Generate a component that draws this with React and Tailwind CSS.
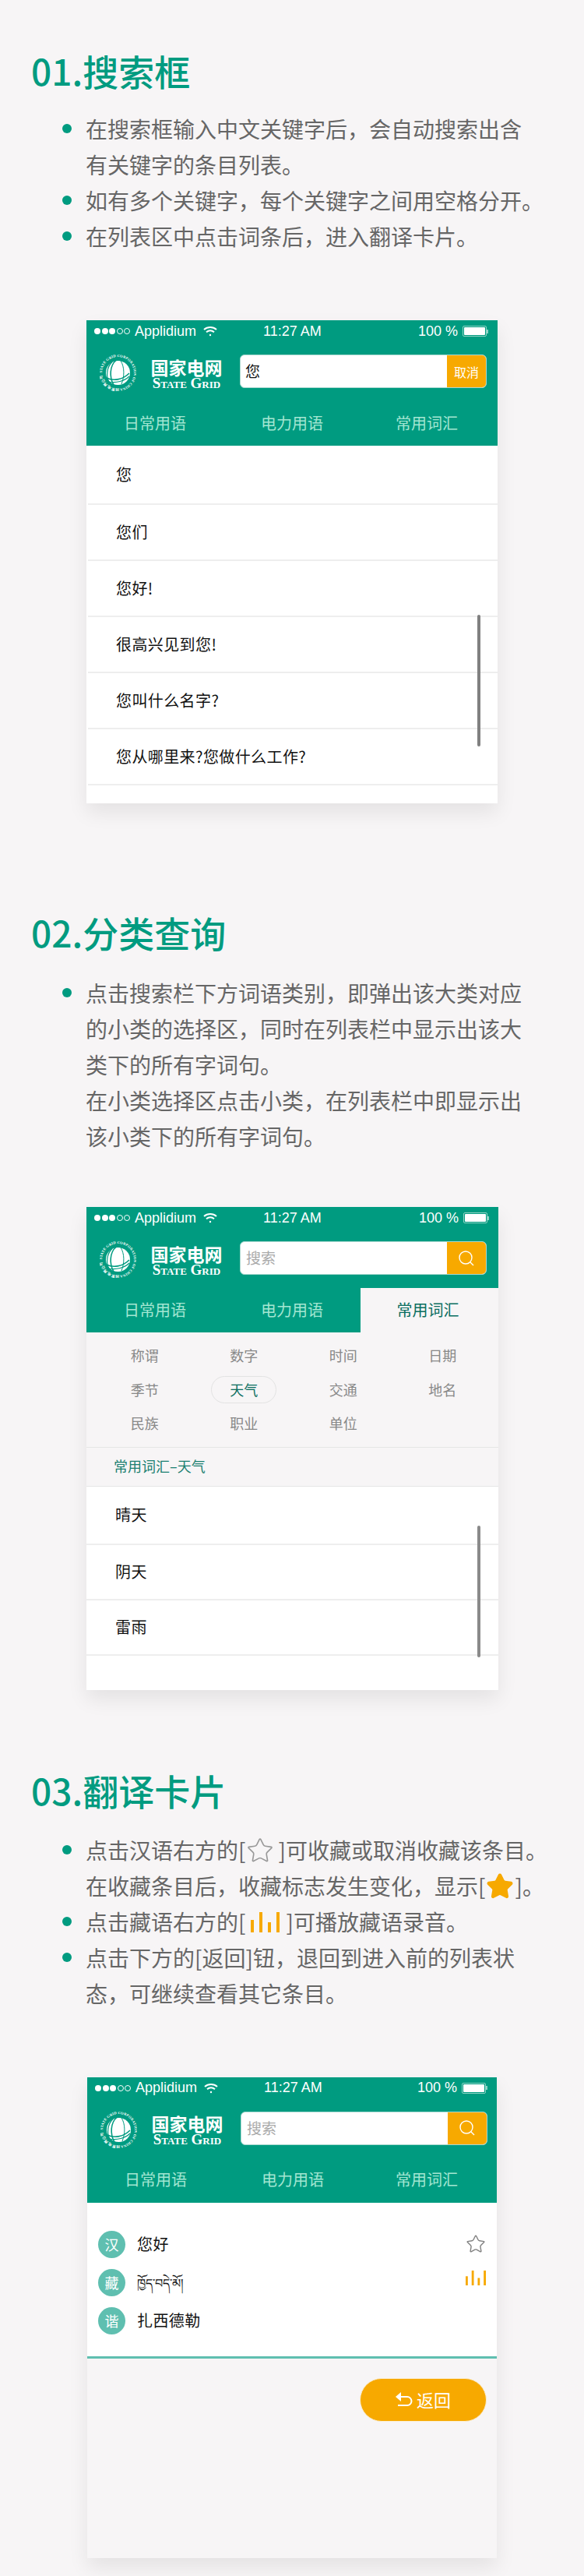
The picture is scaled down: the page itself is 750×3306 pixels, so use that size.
import React, { useId } from "react";
import { Star } from "lucide-react";

const TABS = ["日常用语", "电力用语", "常用词汇"];
const SUBS = ["称谓", "数字", "时间", "日期", "季节", "天气", "交通", "地名", "民族", "职业", "单位"];

function Bars({ className }) {
  return (
    <svg className={className} viewBox="0 0 37 26" preserveAspectRatio="none" fill="#f7a900">
      <rect x="0" y="10" width="4" height="16" />
      <rect x="11" y="0" width="4" height="26" />
      <rect x="22" y="13" width="4" height="13" />
      <rect x="33" y="0" width="4" height="26" />
    </svg>
  );
}

function Logo() {
  const id = useId();
  return (
    <svg width="47" height="47" viewBox="0 0 47 47" className="mt-[4px] shrink-0">
      <defs>
        <path id={id} d="M23.5 23.5 m-20.4 0 a20.4 20.4 0 1 1 40.8 0 a20.4 20.4 0 1 1 -40.8 0" />
      </defs>
      <text fill="#fff" fontSize="4.6" fontWeight="700" fontFamily="Liberation Serif, serif" textLength="125">
        <textPath href={`#${id}`}>STATE GRID CORPORATION OF CHINA 国家电网公司</textPath>
      </text>
      <circle cx="23.5" cy="23.5" r="15.5" fill="#fff" />
      <g fill="none" stroke="#009b80">
        <path d="M21 7.5C13 14 12 29 18 39" strokeWidth="1.6" />
        <path d="M16 9.5C9 16 8 28 12 35" strokeWidth="1.2" />
        <path d="M9 30c8 4 20 3 29-6" strokeWidth="1.6" />
        <path d="M12 35c9 2 20-1 26-7" strokeWidth="1.2" />
        <path d="M27 8c5 8 5 20 1 30" strokeWidth="1" />
      </g>
    </svg>
  );
}

function StatusBar() {
  return (
    <div className="flex h-[28px] items-center pl-[10px] pr-[12px] font-['Liberation_Sans',sans-serif] text-[18px] text-white">
      <div className="flex w-[217px] items-center">
        <span className="size-[8px] rounded-full bg-white" />
        <span className="ml-[1.5px] size-[8px] rounded-full bg-white" />
        <span className="ml-[1.5px] size-[8px] rounded-full bg-white" />
        <span className="ml-[1.5px] size-[8px] rounded-full border border-white" />
        <span className="ml-[1.5px] size-[8px] rounded-full border border-white" />
        <span className="ml-[6px]">Applidium</span>
        <svg className="ml-[9px]" width="18" height="14" viewBox="0 0 18 14" fill="none" stroke="#fff" strokeWidth="2">
          <path d="M1 5c4.500-4 11.500-4 16 0" />
          <path d="M4 8.300c3-2.600 7-2.600 10 0" />
          <circle cx="9" cy="12" r="1.200" fill="#fff" stroke="none" />
        </svg>
      </div>
      <span>11:27 AM</span>
      <span className="ml-auto">100 %</span>
      <span className="ml-[6px] flex h-[14px] w-[31px] rounded-[2px] border border-[#8fd4c5] p-[1px]">
        <span className="w-full rounded-[1px] bg-white" />
      </span>
      <span className="h-[5px] w-[2px] bg-[#8fd4c5]" />
    </div>
  );
}

function PhoneHeader({ value, active }) {
  return (
    <div className="bg-[#009b80]">
      <StatusBar />
      <div className="mt-[16px] flex h-[43px] items-center pl-[17px]">
        <Logo />
        <div className="mt-[3px] ml-[18px] flex w-[93px] flex-col items-center text-white">
          <div className="text-[23px] font-bold leading-[26px] whitespace-nowrap">国家电网</div>
          <div className="font-['Liberation_Serif',serif] text-[19px] font-bold leading-[15px] whitespace-nowrap [font-variant:small-caps]">
            State Grid
          </div>
        </div>
        <div className="ml-[22px] flex h-[43px] w-[317px] overflow-hidden rounded-[6px] border border-[#a9d8cf] bg-white">
          <div className={value ? "flex-1 pl-[6px] text-[19px] leading-[39px] text-[#111]" : "flex-1 pl-[7px] text-[19px] leading-[39px] text-[#aaaaaa]"}>
            {value || "搜索"}
          </div>
          <div className="flex w-[50px] items-center justify-center bg-[#f7a900] text-[16px] text-white">
            {value ? (
              "取消"
            ) : (
              <svg width="20" height="20" viewBox="0 0 20 20" fill="none" stroke="#fff">
                <circle cx="9" cy="9" r="8" strokeWidth="1.400" />
                <path d="M14.800 14.800l4.200 4.200" strokeWidth="1.400" />
              </svg>
            )}
          </div>
        </div>
      </div>
      <div className="mt-[17px] grid h-[57px] grid-cols-[176px_176px_1fr]">
        {TABS.map((tab, i) => (
          <div
            key={tab}
            className={
              i === active
                ? "flex items-center justify-center bg-[#f7f5f6] pr-[4px] pb-[2px] text-[20px] text-[#0a6e60]"
                : i === 2
                  ? "flex items-center justify-center pr-[6px] pb-[2px] text-[20px] text-[#a3e6d2]"
                  : "flex items-center justify-center pb-[2px] text-[20px] text-[#a3e6d2]"
            }
          >
            {tab}
          </div>
        ))}
      </div>
    </div>
  );
}

function Row({ text, first }) {
  return (
    <div className={first ? "ml-[2px] flex h-[76px] items-center border-b-2 border-[#eeeeee] pl-[36px] text-[20px] tracking-[0.4px] text-[#111]" : "ml-[2px] flex h-[72px] items-center border-b-2 border-[#eeeeee] pl-[36px] text-[20px] tracking-[0.4px] text-[#111]"}>
      {text}
    </div>
  );
}

function Bullet({ children }) {
  return (
    <li className="flex">
      <span className="mt-[17px] h-[12px] w-[12px] shrink-0 rounded-full bg-[#009b80]" />
      <div className="ml-[18px] whitespace-nowrap">{children}</div>
    </li>
  );
}

function Title({ children }) {
  return <h2 className="ml-[40px] h-[60px] text-[46px] leading-[60px] font-medium text-[#009b80]">{children}</h2>;
}

function Lang({ tag, text, small }) {
  return (
    <div className="flex items-center">
      <span className="flex size-[35px] items-center justify-center rounded-full bg-[#5fbfb0] text-[18px] text-white">{tag}</span>
      <span className={small ? "ml-[15px] text-[16px] text-[#111]" : "ml-[15px] text-[20px] tracking-[0.4px] text-[#111]"}>{text}</span>
    </div>
  );
}

export default function App() {
  return (
    <div className="h-[3306px] w-[750px] overflow-hidden bg-[#f7f5f6] pt-[60px] font-['Noto_Sans_CJK_SC','Noto_Sans',sans-serif]">
      <Title>01.搜索框</Title>
      <ul className="mt-[22px] ml-[80px] text-[28px] leading-[46px] text-[#666666]">
        <Bullet>
          在搜索框输入中文关键字后，会自动搜索出含
          <br />
          有关键字的条目列表。
        </Bullet>
        <Bullet>如有多个关键字，每个关键字之间用空格分开。</Bullet>
        <Bullet>在列表区中点击词条后，进入翻译卡片。</Bullet>
      </ul>

      <section className="relative mt-[85px] ml-[111px] w-[528px] bg-white shadow-[0_12px_24px_rgba(0,0,0,0.08)]">
        <PhoneHeader value="您" active={-1} />
        <Row first text="您" />
        <Row text="您们" />
        <Row text="您好!" />
        <Row text="很高兴见到您!" />
        <Row text="您叫什么名字?" />
        <Row text="您从哪里来?您做什么工作?" />
        <div className="h-[23px]" />
        <div className="absolute top-[378px] right-[22px] h-[169px] w-[4px] rounded-full bg-[#808080]" />
      </section>

      <div className="mt-[135px]">
        <Title>02.分类查询</Title>
      </div>
      <ul className="mt-[25px] ml-[80px] text-[28px] leading-[46px] text-[#666666]">
        <Bullet>
          点击搜索栏下方词语类别，即弹出该大类对应
          <br />
          的小类的选择区，同时在列表栏中显示出该大
          <br />
          类下的所有字词句。
          <br />
          在小类选择区点击小类，在列表栏中即显示出
          <br />
          该小类下的所有字词句。
        </Bullet>
      </ul>

      <section className="relative mt-[68px] ml-[111px] w-[529px] bg-white shadow-[0_12px_24px_rgba(0,0,0,0.08)]">
        <PhoneHeader active={2} />
        <div className="bg-[#f7f5f6]">
          <div className="grid grid-cols-[127.5px_127.5px_127.5px_127.5px] border-b border-[#e6e6e6] pt-[8px] pb-[8px] pl-[11px]">
            {SUBS.map((sub) => (
              <div key={sub} className="flex h-[43.500px] items-center justify-center text-[18px] text-[#888888]">
                {sub === "天气" ? (
                  <span className="flex h-[35px] w-[84px] items-center justify-center rounded-full border border-[#e3e3e3] text-[#0a6e60]">{sub}</span>
                ) : (
                  sub
                )}
              </div>
            ))}
          </div>
          <div className="h-[49px] pl-[35px] text-[18px] leading-[47px] text-[#1a7f70]">常用词汇–天气</div>
        </div>
        <div className="border-t border-[#e6e6e6]">
          <div className="flex h-[75px] items-center border-b-2 border-[#eeeeee] pl-[37px] text-[20px] tracking-[0.4px] text-[#111]">晴天</div>
          <div className="flex h-[71px] items-center border-b-2 border-[#eeeeee] pl-[37px] text-[20px] tracking-[0.4px] text-[#111]">阴天</div>
          <div className="flex h-[71px] items-center border-b-2 border-[#eeeeee] pl-[37px] text-[20px] tracking-[0.4px] text-[#111]">雷雨</div>
          <div className="h-[44px]" />
        </div>
        <div className="absolute top-[409px] right-[23px] h-[169px] w-[4px] rounded-full bg-[#8a8a8a]" />
      </section>

      <div className="mt-[98px]">
        <Title>03.翻译卡片</Title>
      </div>
      <ul className="mt-[24px] ml-[80px] text-[28px] leading-[46px] text-[#666666]">
        <Bullet>
          点击汉语右方的[
          <Star className="mr-[5px] ml-[1px] inline-block align-[-7px]" size={36} strokeWidth={1.1} color="#999999" />
          ]可收藏或取消收藏该条目。
          <br />
          在收藏条目后，收藏标志发生变化，显示[
          <Star className="mx-[1px] inline-block align-[-7px]" size={36} fill="#f7a900" color="#f7a900" />
          ]。
        </Bullet>
        <Bullet>
          点击藏语右方的[
          <Bars className="mr-[8px] ml-[7px] inline-block h-[26px] w-[37px] align-[-2px]" />
          ]可播放藏语录音。
        </Bullet>
        <Bullet>
          点击下方的[返回]钮，退回到进入前的列表状
          <br />
          态，可继续查看其它条目。
        </Bullet>
      </ul>

      <section className="mt-[85px] ml-[112px] w-[526px] bg-[#f7f5f6] shadow-[0_12px_24px_rgba(0,0,0,0.08)]">
        <PhoneHeader active={-1} />
        <div className="flex h-[200px] flex-col gap-[14px] border-b-[3px] border-[#5fbfb0] bg-white pt-[36px] pr-[14px] pl-[14px]">
          <div className="flex h-[35px] items-center justify-between">
            <Lang tag="汉" text="您好" />
            <Star size={26} strokeWidth={1.3} color="#808080" />
          </div>
          <div className="flex h-[35px] items-center justify-between">
            <Lang small tag="藏" text="ཁྱོད་བདེ་མོ།" />
            <Bars className="mb-[12px] h-[19px] w-[26px]" />
          </div>
          <div className="h-[35px]">
            <Lang tag="谐" text="扎西德勒" />
          </div>
        </div>
        <div className="h-[256px] pt-[25px]">
          <div className="ml-auto mr-[13px] flex h-[56px] w-[163px] items-center justify-center rounded-full border border-[#fbeed2] bg-[#f7a900] text-[22px] text-white">
            <svg width="22" height="19" viewBox="0 0 22 19" fill="#fff" className="mr-[5px]">
              <polygon points="0,6 7,0 7,12" />
              <path d="M6 6H15a5.500 5.500 0 0 1 0 11H3" fill="none" stroke="#fff" strokeWidth="2" />
            </svg>
            返回
          </div>
        </div>
      </section>
    </div>
  );
}
